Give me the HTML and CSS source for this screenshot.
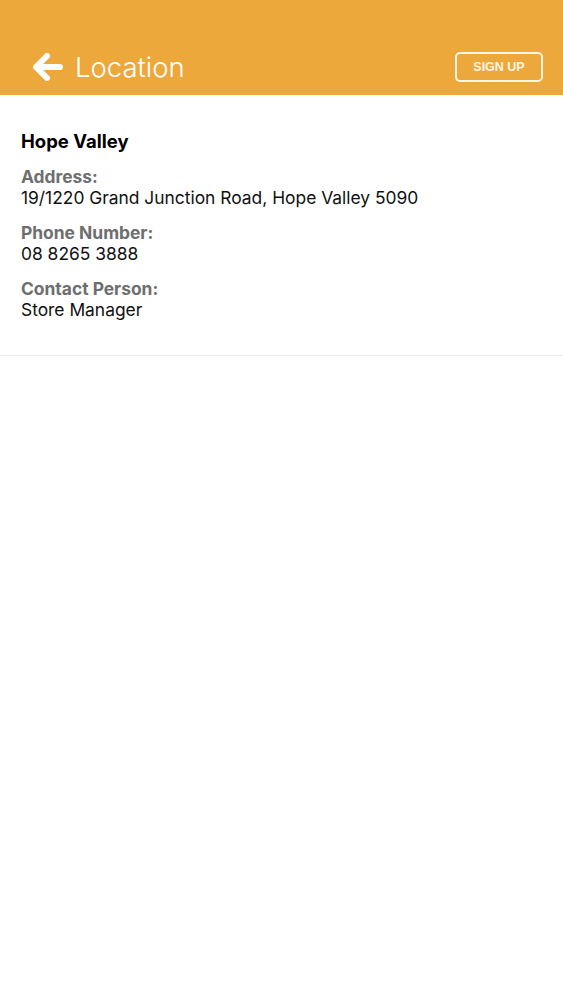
FILE: index.html
```html
<!DOCTYPE html>
<html>
<head>
<meta charset="utf-8">
<link rel="stylesheet" href="styles.css">
</head>
<body>
<header class="topbar">
  <div class="left">
    <svg class="back" width="30" height="28" viewBox="0 0 30 28">
      <path d="M14 3 L3 14 L14 25 M4 14 H27" fill="none" stroke="#fff" stroke-width="6" stroke-linecap="round" stroke-linejoin="round"/>
    </svg>
    <span class="title">Location</span>
  </div>
  <button class="signup">SIGN UP</button>
</header>
<main class="details">
  <h1 class="name">Hope Valley</h1>
  <div class="field">
    <div class="label">Address:</div>
    <div class="value">19/1220 Grand Junction Road, Hope Valley 5090</div>
  </div>
  <div class="field">
    <div class="label">Phone Number:</div>
    <div class="value">08 8265 3888</div>
  </div>
  <div class="field">
    <div class="label">Contact Person:</div>
    <div class="value">Store Manager</div>
  </div>
</main>
</body>
</html>
```
FILE: styles.css
```css
html, body {
  margin: 0;
  padding: 0;
  background: #fff;
  font-family: "Inter", "Liberation Sans", sans-serif;
}
.topbar {
  height: 95px;
  background: #eda83c;
  display: flex;
  align-items: flex-end;
  justify-content: space-between;
  padding: 0 20px 13px 33px;
  box-sizing: border-box;
}
.left {
  display: flex;
  align-items: center;
  gap: 12px;
}
.back {
  display: block;
}
.title {
  color: #fff;
  font-size: 27.5px;
  font-weight: 300;
  line-height: 30px;
}
.signup {
  width: 88px;
  height: 30px;
  border: 2px solid #fdf5e6;
  border-radius: 5px;
  background: transparent;
  color: #fdf5e6;
  font-family: "Liberation Sans", sans-serif;
  font-weight: bold;
  font-size: 12.5px;
  padding: 0;
}
.details {
  padding: 35px 21px 35px;
  border-bottom: 1px solid #ececec;
}
.name {
  margin: 0 0 14px;
  font-size: 18.5px;
  font-weight: 700;
  color: #000;
  line-height: 22px;
}
.field {
  margin-bottom: 14px;
}
.field:last-child {
  margin-bottom: 0;
}
.label {
  color: #6e6e6e;
  font-weight: 700;
  font-size: 17.4px;
  line-height: 21px;
}
.value {
  color: #111;
  font-size: 17.4px;
  line-height: 21px;
}
```
